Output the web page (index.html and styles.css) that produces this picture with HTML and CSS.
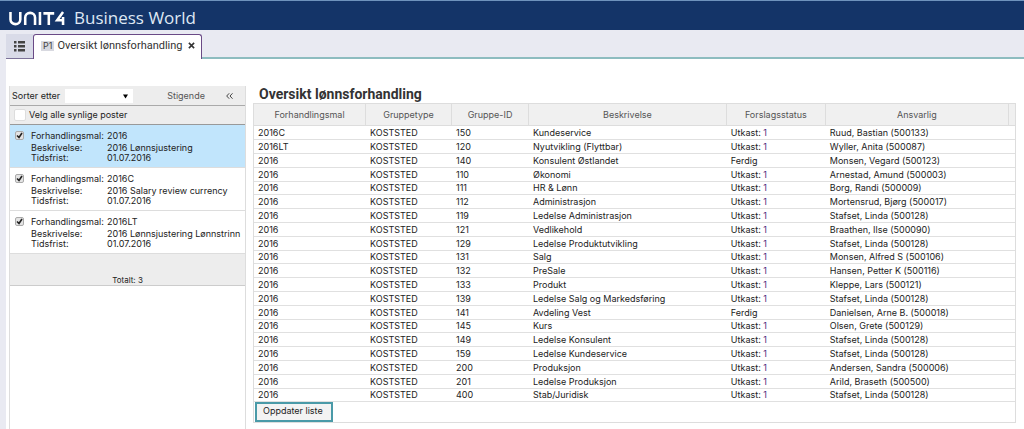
FILE: index.html
```html
<!DOCTYPE html>
<html lang="nb">
<head>
<meta charset="utf-8">
<title>Oversikt lønnsforhandling</title>
<link rel="stylesheet" href="styles.css">
</head>
<body>
<header class="brand">
  <svg class="brand-logo" viewBox="0 0 58 15" role="img" aria-label="UNIT4" fill="none" stroke="currentColor" stroke-width="2.6">
    <path d="M1.5 1V8.500a5 4.700 0 0 0 10 0V1M16.500 14V6.500a5 4.700 0 0 1 10 0V14M31.500 1V14M35 2.300H46M40.500 2.300V14M55 1L49 9.300H56M55 6V14"/>
  </svg>
  <span class="brand-name">Business World</span>
</header>
<nav class="tabs">
  <button class="menu-button" type="button" aria-label="Meny">
    <svg class="menu-icon" viewBox="0 0 11 11" fill="currentColor"><path d="M0 0h2.500v2.500H0zM4 0h7v2.500H4zM0 4h2.500v2.500H0zM4 4h7v2.500H4zM0 8h2.500v2.500H0zM4 8h7v2.500H4z"/></svg>
  </button>
  <div class="tab">
    <span class="tab-badge">P1</span>
    <a class="tab-title" href="#oversikt">Oversikt lønnsforhandling</a>
    <button class="tab-close" type="button" aria-label="Lukk">
      <svg class="close-icon" viewBox="0 0 8 8" fill="none" stroke="currentColor" stroke-width="1.8"><path d="M1 1L7 7M7 1L1 7"/></svg>
    </button>
  </div>
  <div class="tabs-rest"></div>
</nav>
<main class="page">
  <aside class="sidebar">
    <div class="sort-bar">
      <label for="sort">Sorter etter</label>
      <span class="select-wrap"><select id="sort" class="sort-select"><option></option></select><svg class="select-arrow" viewBox="0 0 6 5"><path d="M0 0H6L3 5z"/></svg></span>
      <button class="order-button" type="button">Stigende</button>
      <button class="collapse-button" type="button" aria-label="Skjul"><svg class="collapse-icon" viewBox="0 0 7 6" fill="none" stroke="currentColor"><path d="M3.200 .3L.7 3L3.200 5.700M6.500 .3L4 3L6.500 5.700"/></svg></button>
    </div>
    <label class="select-all"><input class="check check-large" type="checkbox"><span>Velg alle synlige poster</span></label>
    <ul class="items">
      <li class="item selected"><input class="check" type="checkbox" checked aria-label="2016"><dl class="fields"><dt class="lead">Forhandlingsmal:</dt><dd class="lead">2016</dd><dt>Beskrivelse:</dt><dd>2016 Lønnsjustering</dd><dt>Tidsfrist:</dt><dd>01.07.2016</dd></dl></li>
      <li class="item"><input class="check" type="checkbox" checked aria-label="2016C"><dl class="fields"><dt class="lead">Forhandlingsmal:</dt><dd class="lead">2016C</dd><dt>Beskrivelse:</dt><dd>2016 Salary review currency</dd><dt>Tidsfrist:</dt><dd>01.07.2016</dd></dl></li>
      <li class="item"><input class="check" type="checkbox" checked aria-label="2016LT"><dl class="fields"><dt class="lead">Forhandlingsmal:</dt><dd class="lead">2016LT</dd><dt>Beskrivelse:</dt><dd>2016 Lønnsjustering Lønnstrinn</dd><dt>Tidsfrist:</dt><dd>01.07.2016</dd></dl></li>
    </ul>
    <div class="total">Totalt: 3</div>
  </aside>
  <section class="content" id="oversikt">
    <h1 class="title">Oversikt lønnsforhandling</h1>
    <table class="grid">
      <colgroup><col class="c-mal"><col class="c-type"><col class="c-id"><col class="c-desc"><col class="c-status"><col><col class="c-end"></colgroup>
      <thead><tr><th>Forhandlingsmal</th><th>Gruppetype</th><th>Gruppe-ID</th><th>Beskrivelse</th><th>Forslagsstatus</th><th>Ansvarlig</th><th></th></tr></thead>
      <tbody>
        <tr><td>2016C</td><td>KOSTSTED</td><td>150</td><td>Kundeservice</td><td>Utkast: <span class="count">1</span></td><td colspan="2">Ruud, Bastian (500133)</td></tr>
        <tr><td>2016LT</td><td>KOSTSTED</td><td>120</td><td>Nyutvikling (Flyttbar)</td><td>Utkast: <span class="count">1</span></td><td colspan="2">Wyller, Anita (500087)</td></tr>
        <tr><td>2016</td><td>KOSTSTED</td><td>140</td><td>Konsulent Østlandet</td><td>Ferdig</td><td colspan="2">Monsen, Vegard (500123)</td></tr>
        <tr><td>2016</td><td>KOSTSTED</td><td>110</td><td>Økonomi</td><td>Utkast: <span class="count">1</span></td><td colspan="2">Arnestad, Amund (500003)</td></tr>
        <tr><td>2016</td><td>KOSTSTED</td><td>111</td><td>HR &amp; Lønn</td><td>Utkast: <span class="count">1</span></td><td colspan="2">Borg, Randi (500009)</td></tr>
        <tr><td>2016</td><td>KOSTSTED</td><td>112</td><td>Administrasjon</td><td>Utkast: <span class="count">1</span></td><td colspan="2">Mortensrud, Bjørg (500017)</td></tr>
        <tr><td>2016</td><td>KOSTSTED</td><td>119</td><td>Ledelse Administrasjon</td><td>Utkast: <span class="count">1</span></td><td colspan="2">Stafset, Linda (500128)</td></tr>
        <tr><td>2016</td><td>KOSTSTED</td><td>121</td><td>Vedlikehold</td><td>Utkast: <span class="count">1</span></td><td colspan="2">Braathen, Ilse (500090)</td></tr>
        <tr><td>2016</td><td>KOSTSTED</td><td>129</td><td>Ledelse Produktutvikling</td><td>Utkast: <span class="count">1</span></td><td colspan="2">Stafset, Linda (500128)</td></tr>
        <tr><td>2016</td><td>KOSTSTED</td><td>131</td><td>Salg</td><td>Utkast: <span class="count">1</span></td><td colspan="2">Monsen, Alfred S (500106)</td></tr>
        <tr><td>2016</td><td>KOSTSTED</td><td>132</td><td>PreSale</td><td>Utkast: <span class="count">1</span></td><td colspan="2">Hansen, Petter K (500116)</td></tr>
        <tr><td>2016</td><td>KOSTSTED</td><td>133</td><td>Produkt</td><td>Utkast: <span class="count">1</span></td><td colspan="2">Kleppe, Lars (500121)</td></tr>
        <tr><td>2016</td><td>KOSTSTED</td><td>139</td><td>Ledelse Salg og Markedsføring</td><td>Utkast: <span class="count">1</span></td><td colspan="2">Stafset, Linda (500128)</td></tr>
        <tr><td>2016</td><td>KOSTSTED</td><td>141</td><td>Avdeling Vest</td><td>Ferdig</td><td colspan="2">Danielsen, Arne B. (500018)</td></tr>
        <tr><td>2016</td><td>KOSTSTED</td><td>145</td><td>Kurs</td><td>Utkast: <span class="count">1</span></td><td colspan="2">Olsen, Grete (500129)</td></tr>
        <tr><td>2016</td><td>KOSTSTED</td><td>149</td><td>Ledelse Konsulent</td><td>Utkast: <span class="count">1</span></td><td colspan="2">Stafset, Linda (500128)</td></tr>
        <tr><td>2016</td><td>KOSTSTED</td><td>159</td><td>Ledelse Kundeservice</td><td>Utkast: <span class="count">1</span></td><td colspan="2">Stafset, Linda (500128)</td></tr>
        <tr><td>2016</td><td>KOSTSTED</td><td>200</td><td>Produksjon</td><td>Utkast: <span class="count">1</span></td><td colspan="2">Andersen, Sandra (500006)</td></tr>
        <tr><td>2016</td><td>KOSTSTED</td><td>201</td><td>Ledelse Produksjon</td><td>Utkast: <span class="count">1</span></td><td colspan="2">Arild, Braseth (500500)</td></tr>
        <tr><td>2016</td><td>KOSTSTED</td><td>400</td><td>Stab/Juridisk</td><td>Utkast: <span class="count">1</span></td><td colspan="2">Stafset, Linda (500128)</td></tr>
      </tbody>
    </table>
    <div class="actions"><button class="update-button" type="button">Oppdater liste</button></div>
  </section>
</main>
</body>
</html>
```
FILE: styles.css
```css
* { box-sizing: border-box; }

body {
  margin: 0;
  min-height: 100vh;
  display: flex;
  flex-direction: column;
  background: #e9eaf2;
  color: #222;
  font: 9px/12px Inter, Roboto, sans-serif;
}

button {
  margin: 0;
  padding: 0;
  border: 0;
  background: none;
  color: inherit;
  font: inherit;
}

/* Brand bar */
.brand {
  display: flex;
  align-items: center;
  gap: 8px;
  height: 30px;
  padding: 5px 9px 0;
  border-top: 1px solid #6f93bd;
  background: #143468;
  color: #fff;
}
.brand-logo { width: 57px; height: 15px; }
.brand-name { color: #dfe8f4; font: 17px/20px "Open Sans", sans-serif; }

/* Tabs */
.tabs { display: flex; padding: 4px 0 0 6px; height: 29px; }
.menu-button {
  width: 27px;
  background: #d9dbe8;
  border-bottom: 1px solid #7c7299;
  color: #444;
}
.menu-icon { display: block; width: 11px; height: 11px; margin: 0 auto; }
.tab {
  display: flex;
  align-items: center;
  padding: 0 6px 3px 7px;
  border: 1px solid #6a4a86;
  border-bottom: 0;
  border-radius: 3px 3px 0 0;
  background: #fff;
}
.tab-badge { padding: 0 2px; background: #d8d9e0; color: #444; line-height: 10px; }
.tab-title { margin-left: 3px; color: #333; font: 11px/16px Roboto, sans-serif; text-decoration: none; }
.tab-close { margin-left: 5px; color: #333; }
.close-icon { display: block; width: 7px; height: 7px; }
.tabs-rest { flex: 1; border-bottom: 2px solid #8dbcc0; }

/* Page */
.page {
  flex: 1;
  display: flex;
  gap: 7px;
  margin-left: 6px;
  padding: 27px 8px 0 3px;
  background: #fff;
}
.sidebar {
  flex: none;
  width: 237px;
  border: solid #ddd;
  border-width: 0 1px;
}
.sort-bar {
  display: flex;
  align-items: center;
  height: 20px;
  padding: 0 12px 0 2px;
  border-bottom: 1px solid #aaa;
  background: #ededed;
}
.select-wrap { position: relative; width: 68px; height: 14px; margin-left: 5px; }
.sort-select {
  appearance: none;
  display: block;
  width: 100%;
  height: 100%;
  border: 0;
  background: #fff;
}
.select-arrow { position: absolute; right: 5px; top: 5px; width: 5px; height: 5px; pointer-events: none; }
.order-button { margin-left: 34px; color: #555; }
.collapse-button { margin-left: auto; color: #444; }
.collapse-icon { display: block; width: 7px; height: 6px; }

.check {
  appearance: none;
  flex: none;
  width: 9px;
  height: 9px;
  margin: 0;
  border: 1px solid #aaa;
  border-radius: 2px;
  background: #eee;
}
.check:checked {
  background: #e4e4e4 url("data:image/svg+xml,%3Csvg xmlns='http://www.w3.org/2000/svg' viewBox='0 0 7 7'%3E%3Cpath d='M1 3.500L3 5.500L6 1' fill='none' stroke='%23222' stroke-width='1.600'/%3E%3C/svg%3E");
}
.check-large { width: 12px; height: 12px; border-color: #ddd; background: #fff; }
.select-all {
  display: flex;
  align-items: center;
  gap: 3px;
  height: 19px;
  padding-left: 4px;
  border-bottom: 1px solid #999;
  background: #ededed;
}

.items { margin: 0; padding: 0; list-style: none; }
.item {
  display: flex;
  gap: 6px;
  height: 43px;
  padding: 6px 0 0 5px;
  border-bottom: 1px solid #ddd;
}
.item.selected { background: #c1e5fc; }
.fields { display: grid; grid-template-columns: 76px 1fr; align-content: start; margin: 0; padding-left: 1px; line-height: 10px; white-space: nowrap; }
.fields dd { margin: 0; }
.fields .lead { margin-bottom: 2px; }
.total {
  padding: 21px 0 0;
  border-bottom: 1px solid #ccc;
  background: #ededed;
  font-size: 8px;
  line-height: 10px;
  text-align: center;
}

/* Overview */
.content { flex: 1; min-width: 0; }
.title { margin: 0; padding: 0 6px 1px; color: #333; font: 700 14px/16px Roboto, sans-serif; }
.grid { width: 100%; border-collapse: separate; border-spacing: 0; table-layout: fixed; border: 1px solid #ddd; border-bottom: 0; }
.c-mal { width: 112px; }
.c-type { width: 86px; }
.c-id { width: 77px; }
.c-desc { width: 26%; }
.c-status { width: 13%; }
.c-end { width: 6px; }
.grid th {
  height: 22px;
  padding: 0;
  border-right: 1px solid #ddd;
  border-bottom: 1px solid #ddd;
  background: #f0f0f0;
  color: #555;
  font-weight: 400;
}
.grid th:last-child { border-right: 0; }
.grid td { height: 14px; padding: 0 4px; border-bottom: 1px solid #e0e0e0; white-space: nowrap; }
.grid tr:nth-child(5n) td { height: 13px; }
.count { color: #4b2a7b; }
.actions { padding: 0 1px; border: 1px solid #ddd; border-top: 0; }
.update-button {
  display: block;
  height: 20px;
  padding: 0 8px 2px 6px;
  border: 2px solid #4a9aa8;
  background: #f3f3f3;
}
```
